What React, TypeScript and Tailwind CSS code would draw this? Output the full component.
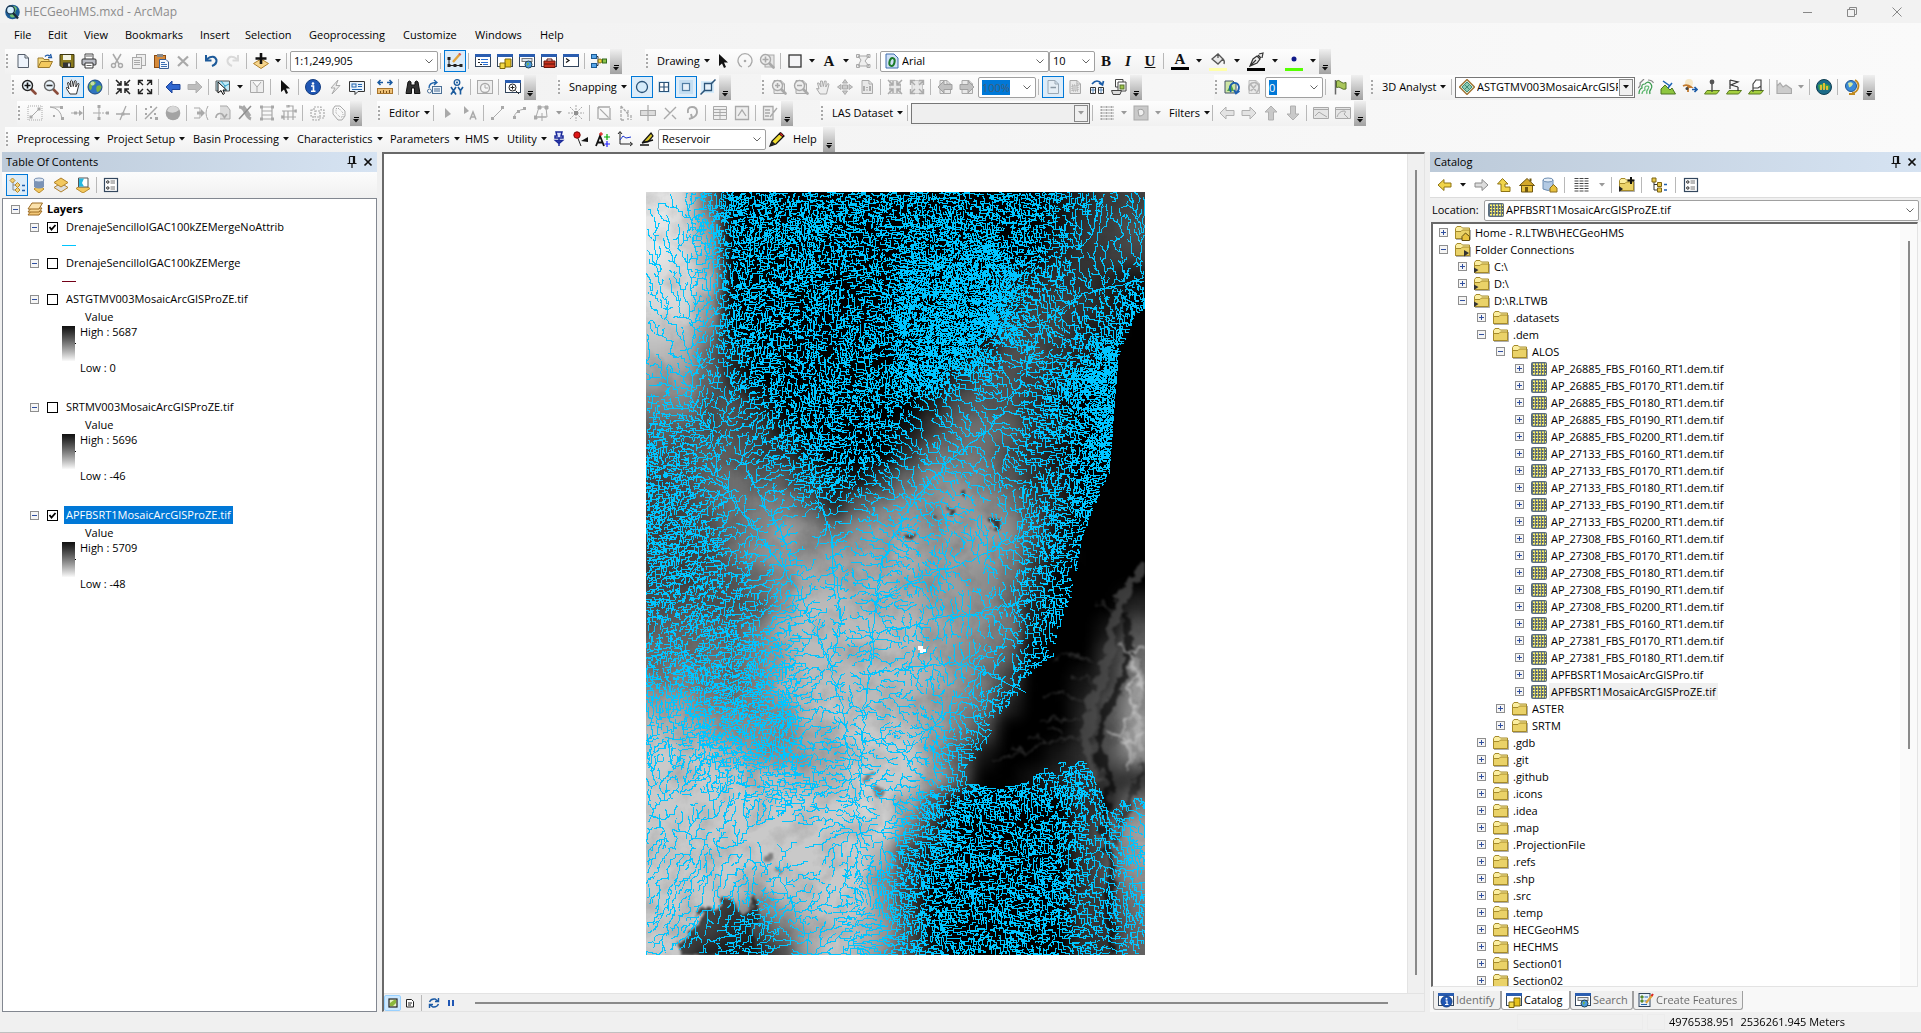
import React from "react";

/* ------------------------------------------------------------------ */
/* Icons                                                               */
/* ------------------------------------------------------------------ */

const G = "#a9a9a9";
const LG = "#d9d9d9";

const lens = (c: string, fill: string, inner: React.ReactNode) => (
  <>
    <path d="M10 10 L14.5 14.5" stroke={c === G ? G : "#8a4b3a"} strokeWidth="2.6" strokeLinecap="round" />
    <circle cx="6.5" cy="6.5" r="5" fill={fill} stroke={c} strokeWidth="1.4" />
    {inner}
  </>
);
const sheet = (c: string, fill: string) => <path d="M3 1.5 H10 L13.5 5 V14.5 H3 Z M10 1.5 V5 H13.5" fill={fill} stroke={c} />;
const win = (
  <>
    <rect x="0.5" y="1.5" width="15" height="12" fill="#fff" stroke="#33455c" />
    <rect x="0" y="1" width="16" height="3" fill="#2a5db0" />
  </>
);
const globe = (
  <>
    <circle cx="8" cy="8" r="7" fill="#2f74c0" stroke="#1b4a80" />
    <path d="M4 3 Q8 1 9 4 Q7 7 5 7 Q5 11 3 11 Q0.5 7 4 3 Z M10 7 Q14 5 14.5 8 Q13 13 10 13 Q8.500 9 10 7 Z" fill="#7cb342" />
    <circle cx="5.500" cy="4.500" r="2" fill="#fff" opacity=".55" />
  </>
);
const raster = (
  <>
    <rect x="0.5" y="1.5" width="15" height="13" rx="1" fill="#5f7488" stroke="#5b6d7d" />
    <path d="M2 3.500 H15 M2 6.500 H15 M2 9.500 H15 M2 12.500 H15" stroke="#fff36a" strokeWidth="2" strokeDasharray="2 1" />
    <path d="M2 5 H15 M2 8 H15 M2 11 H15" stroke="#1c1c1c" strokeWidth="1" strokeDasharray="1 2" />
  </>
);
const folder = (
  <>
    <path d="M0.500 13.500 V3.500 L2 1.500 H6 L7.500 3 H14.500 V13.500 Z" fill="#fbeea0" stroke="#a58a2a" />
    <path d="M0.500 13.500 V6.500 H6 L7.500 5 H14.500 V13.500 Z" fill="#ead268" stroke="#a58a2a" />
    <path d="M1 14.500 H15.500 V5" fill="none" stroke="#777" opacity=".6" />
  </>
);
const corners = (c: string, inward: boolean) =>
  inward ? (
    <path d="M1 1 L6 6 M6 2 V6 H2 M15 1 L10 6 M10 2 V6 H14 M1 15 L6 10 M6 14 V10 H2 M15 15 L10 10 M10 14 V10 H14" fill="none" stroke={c} strokeWidth="1.500" />
  ) : (
    <path d="M6 6 L2 2 M1.500 6 V1.500 H6 M10 6 L14 2 M14.500 6 V1.500 H10 M6 10 L2 14 M1.500 10 V14.500 H6 M10 10 L14 14 M14.500 10 V14.500 H10" fill="none" stroke={c} strokeWidth="1.400" />
  );
const arrowL = (f: string, s: string) => <path d="M1 8 L7 2 V5.500 H15 V10.500 H7 V14 Z" fill={f} stroke={s} />;
const arrowR = (f: string, s: string) => <path d="M15 8 L9 2 V5.500 H1 V10.500 H9 V14 Z" fill={f} stroke={s} />;
const layersIcon = (top: string, y: number) => <path d={`M8 ${y} L15 ${y + 4.5} L8 ${y + 9} L1 ${y + 4.5} Z`} fill={top} stroke="#b0812a" />;
const cursor = (c: string) => <path d="M4 1 V13 L7 10.500 L9 15 L11 14 L9 9.500 H13 Z" fill={c} />;
const green = <path d="M3 11.500 H15.500 L12.500 15 H0.500 Z" fill="#a6d040" stroke="#5b7d20" />;

const ICONS: Record<string, React.ReactNode> = {
  app: (
    <>
      <circle cx="8.500" cy="8" r="7.300" fill="#1c5c96" />
      <path d="M5 2 Q12 1 13 5 Q10 8 12 12 Q8 15 6 12 Z" fill="#6fbf73" />
      <circle cx="6.500" cy="6" r="4" fill="#d5efff" stroke="#1a3550" strokeWidth="1.300" />
      <path d="M9 9 L14 14.500" stroke="#1a2a3a" strokeWidth="2.400" />
    </>
  ),
  newDoc: sheet("#555e6b", "#eef4fc"),
  open: (
    <>
      <path d="M1 14 V5 H6 L7 6.500 H12 V14 Z" fill="#f7dd80" stroke="#9c7a2c" />
      <path d="M1 14.500 L4 8.500 H15.500 L12.500 14.500 Z" fill="#f3c95e" stroke="#9c7a2c" />
      <path d="M8 3.500 Q10 1 13 3 M11 4.500 L14.500 4.500 L13.500 1" fill="none" stroke="#1e5aa8" strokeWidth="1.300" />
    </>
  ),
  save: (
    <>
      <path d="M1 1.500 H15 V14.500 H3 L1 12.500 Z" fill="#8a7a1e" stroke="#3c3610" />
      <rect x="4" y="2" width="8" height="5" fill="#f2f2e2" />
      <rect x="4" y="9.500" width="8" height="5" fill="#333" />
      <rect x="9" y="10.500" width="2" height="3" fill="#ddd" />
    </>
  ),
  print: (
    <>
      <path d="M4 6 V1 H12 V6" fill="#fff" stroke="#444" />
      <rect x="1" y="6" width="14" height="6" rx="1" fill="#b9bcc4" stroke="#333" />
      <path d="M4 10 H12 V15 H4 Z" fill="#fff" stroke="#333" />
      <path d="M5.500 12.500 H10.500 M5 3 H11" stroke="#666" />
    </>
  ),
  cut: (
    <>
      <path d="M4 1 L10 11 M12 1 L6 11" stroke={G} strokeWidth="1.500" />
      <circle cx="4.500" cy="12.500" r="2" fill="none" stroke={G} strokeWidth="1.400" />
      <circle cx="11.500" cy="12.500" r="2" fill="none" stroke={G} strokeWidth="1.400" />
    </>
  ),
  copy: (
    <>
      <rect x="5.500" y="1.500" width="9" height="11" fill="#eee" stroke={G} />
      <rect x="1.500" y="4.500" width="9" height="11" fill="#eee" stroke={G} />
      <path d="M3 7.500 H9 M3 9.500 H9 M3 11.500 H9" stroke={G} />
    </>
  ),
  paste: (
    <>
      <rect x="1.500" y="2.500" width="11" height="12" fill="#d68a3a" stroke="#8a4a10" />
      <rect x="4" y="1" width="6" height="3" fill="#888" />
      <path d="M6.500 6.500 H13 L15.500 9 V15.500 H6.500 Z" fill="#f5f9ff" stroke="#3b5f94" />
      <path d="M8 9.500 H12 M8 11.500 H14 M8 13.500 H14" stroke="#3b6fb4" />
    </>
  ),
  del: <path d="M3 3.500 L13 13 M13 3.500 L3 13" stroke={G} strokeWidth="2.200" />,
  undo: <path d="M4 6 Q11 1 13.500 7 Q14 11 9 13 M3 2 V7.500 H8.500" fill="none" stroke="#1d5a9a" strokeWidth="2" />,
  redo: <path d="M12 6 Q5 1 2.500 7 Q2 11 7 13 M13 2 V7.500 H7.500" fill="none" stroke={LG} strokeWidth="2" />,
  addData: (
    <>
      <path d="M8 6 L15.500 10.500 L8 15.500 L0.500 10.500 Z" fill="#f7d58c" stroke="#b0812a" />
      <path d="M8 0 V11 M2.500 5.500 H13.500" stroke="#111" strokeWidth="2.600" />
    </>
  ),
  editor: (
    <>
      <path d="M2 12.500 H14 M2 12.500 L2 5" stroke="#222" />
      <path d="M0.500 11 h3 v3 h-3 Z M6.500 11 h3 v3 h-3 Z M12.500 11 h3 v3 h-3 Z M0.500 4 h3 v3 h-3 Z" fill="#222" />
      <path d="M6 9 L13 1" stroke="#e2a33c" strokeWidth="2.400" />
      <path d="M12.300 1.800 L13.500 0.500" stroke="#d55" strokeWidth="2.400" />
    </>
  ),
  winToc: (
    <>
      {win}
      <path d="M3 6.500 H5 M3 9.500 H5 M5 11.500 H7" stroke="#222" />
      <path d="M6 6.500 H13 M6 9.500 H13 M8 11.500 H13" stroke="#2a6fd0" />
    </>
  ),
  winCatalog: (
    <>
      {win}
      <path d="M8 6 H14 V14 H8 Z" fill="#e6c21e" stroke="#7d6608" />
      <path d="M3 10 H8 V15.500 H3 Z" fill="#f4da4a" stroke="#7d6608" />
    </>
  ),
  winSearch: (
    <>
      {win}
      <rect x="3" y="5.500" width="10" height="3" fill="#dfe6ee" stroke="#777" />
      <circle cx="9.500" cy="11.500" r="3.500" fill="#4b9be0" stroke="#245" />
      <path d="M8 10 q2 -1 2 1 q-1 1 -2 2 Z" fill="#7cb342" />
    </>
  ),
  winIdentify: (
    <>
      {win}
      <circle cx="8.500" cy="9.500" r="5.500" fill="#1f56b4" stroke="#143d80" />
      <circle cx="8.500" cy="6.800" r="1" fill="#fff" />
      <path d="M7.500 9 H9 V12.500 M7 12.500 H10.500" fill="none" stroke="#fff" strokeWidth="1.200" />
    </>
  ),
  winToolbox: (
    <>
      {win}
      <path d="M3 8 H14 V14.500 H3 Z" fill="#c8321f" stroke="#6a140a" />
      <path d="M6 8 V6 H11 V8 M3 11 H14" fill="none" stroke="#5a1008" />
    </>
  ),
  winPython: (
    <>
      {win}
      <path d="M3 5.500 L6 7.500 L3 9.500" fill="none" stroke="#111" strokeWidth="1.200" />
    </>
  ),
  model: (
    <>
      <path d="M5 3.500 H7 V12.500 H5 M7 8 H10" fill="none" stroke="#333" />
      <rect x="0.500" y="1.500" width="5" height="4" fill="#58a6e8" stroke="#1b5a94" />
      <rect x="0.500" y="10.500" width="5" height="4" fill="#58a6e8" stroke="#1b5a94" />
      <circle cx="9" cy="8" r="2" fill="#f1d33b" stroke="#8a7412" />
      <rect x="11.500" y="6" width="4" height="4" fill="#8bc34a" stroke="#33691e" />
    </>
  ),
  zoomIn: lens("#222", "#eaf4fb", <path d="M6.500 3.500 V9.500 M3.500 6.500 H9.500" stroke="#111" strokeWidth="1.600" />),
  zoomOut: lens("#666", "#eaf4fb", <path d="M3.500 6.500 H9.500" stroke="#333" strokeWidth="1.600" />),
  hand: <path d="M5 15 L1.500 9.500 Q1 8 2.500 8.500 L4 10 L2.500 4 Q3 2.500 4 4 L6 8 L5.500 2 Q6.500 0.500 7.300 2 L8.300 7.500 L9.500 2 Q10.500 1 11.200 2.200 L10.800 8 L12.800 4.500 Q14 4 14 5.200 L12.500 11 L11.500 15 Z" fill="#fff" stroke="#333" />,
  globe,
  fixedIn: corners("#222", true),
  fixedOut: corners("#222", false),
  back: arrowL("#2f66cf", "#1d449a"),
  forward: arrowR("#bdbdbd", "#b0b0b0"),
  select: (
    <>
      <path d="M1 2 H14.500 V12 H1 Z" fill="#bfe9f7" stroke="#555" />
      <path d="M6 2 L10 7 L14 5 M10 7 L9 12" fill="none" stroke="#2b9dc5" />
      <path d="M3 3 V14 L6 11.500 L8 15.500 L9.500 14.500 L8 11 H11.500 Z" fill="#fff" stroke="#111" />
    </>
  ),
  clearSel: <path d="M1.500 1.500 H14.500 V13.500 H1.500 Z M4 3 L8 8 L12 3 M8 8 V13" fill="#eee" stroke={G} />,
  cursor: cursor("#111"),
  cursorGray: <path d="M5 3 V13 L11 9 Z" fill={G} />,
  identify: (
    <>
      <circle cx="8" cy="8" r="7.500" fill="#1f56b4" stroke="#143d80" />
      <circle cx="8" cy="4.500" r="1.300" fill="#fff" />
      <path d="M6 7 H8.500 V12 M6 12.200 H10.500" fill="none" stroke="#fff" strokeWidth="1.600" />
    </>
  ),
  bolt: <path d="M11 1 L4 9 H8 L5 15 L13 6.500 H9 Z" fill="#eee" stroke={G} />,
  popup: (
    <>
      <path d="M0.500 2.500 H15.500 V12.500 H9 L6 15.500 V12.500 H0.500 Z" fill="#e9f2fb" stroke="#333" />
      <rect x="3" y="5" width="4" height="3" fill="none" stroke="#2466b0" />
      <path d="M9 5.500 H13 M9 7.500 H13 M3 10.500 H13" stroke="#2466b0" />
    </>
  ),
  measure: (
    <>
      <path d="M1 3.500 H6 M10 3.500 H15 M3.500 1 L1 3.500 L3.500 6 M12.500 1 L15 3.500 L12.500 6" fill="none" stroke="#1a5aa0" strokeWidth="1.500" />
      <rect x="0.500" y="9.500" width="15" height="5" fill="#eec178" stroke="#a8742c" />
      <path d="M3.500 14 V12 M6.500 14 V11 M9.500 14 V12 M12.500 14 V11" stroke="#7a4f14" />
    </>
  ),
  find: <path d="M1 14.500 L3 3 Q4.500 1 6 3 V6 H10 V3 Q11.500 1 13 3 L15 14.500 H9.500 V9 H6.500 V14.500 Z" fill="#333" stroke="#111" />,
  route: (
    <>
      <path d="M2 9 Q2 3.500 9 3.500 M7 1 L10 3.500 L7 6" fill="none" stroke="#1e62a8" strokeWidth="1.300" />
      <rect x="5.500" y="7.500" width="9" height="7" fill="#eef4fa" stroke="#4a6f96" />
      <path d="M7 10 H13 M7 12 H13" stroke="#4a6f96" />
      <circle cx="2.500" cy="12" r="2" fill="#fff" stroke="#4a6f96" />
    </>
  ),
  xy: (
    <>
      <circle cx="8" cy="3.500" r="2.800" fill="#e7f2fb" stroke="#1a5a9c" strokeWidth="1.300" />
      <circle cx="8" cy="3.500" r="1" fill="#1a5a9c" />
      <path d="M2 8 L7 15.500 M7 8 L2 15.500 M9 8 L11.500 11.500 L14 8 M11.500 11.500 V15.500" fill="none" stroke="#1a5a9c" strokeWidth="1.600" />
    </>
  ),
  time: (
    <>
      <rect x="0.500" y="1.500" width="15" height="13" fill="#eee" stroke={G} />
      <circle cx="8" cy="9" r="4.500" fill="#f5f5f5" stroke={G} strokeWidth="1.300" />
      <path d="M8 6 V9 H11" fill="none" stroke={G} />
    </>
  ),
  viewer: (
    <>
      {win}
      <circle cx="7.500" cy="8.500" r="3.500" fill="#fff" stroke="#222" />
      <path d="M7.500 6.500 V10.500 M5.500 8.500 H9.500 M10.500 11.500 L14 15" stroke="#222" />
    </>
  ),
  snapPoint: <circle cx="8" cy="8" r="5.500" fill="#d5ebfa" stroke="#2a5378" strokeWidth="1.300" />,
  snapEnd: (
    <>
      <rect x="2" y="2" width="12" height="12" fill="#d5ebfa" />
      <path d="M3.500 3.500 H12.500 V12.500 H3.500 Z M8 3.500 V12.500 M3.500 8 H12.500" fill="#fff" stroke="#2a5378" strokeWidth="1.200" />
    </>
  ),
  snapVertex: (
    <>
      <rect x="1" y="1" width="14" height="14" fill="#c4def2" />
      <rect x="4.500" y="4.500" width="7" height="7" fill="#e6f1fa" stroke="#4f7da4" strokeWidth="1.200" />
    </>
  ),
  snapEdge: (
    <>
      <path d="M1 2 H14 V14 H1 Z" fill="#d5ebfa" />
      <path d="M4.500 4.500 H11.500 V11.500 H4.500 Z" fill="#e6f1fa" stroke="#2a5378" strokeWidth="1.300" />
      <path d="M0.500 15.500 L4.500 11.500 M11.500 4.500 L15.500 0.500" stroke="#2a5378" strokeWidth="1.500" />
    </>
  ),
  g1: (
    <>
      <rect x="1" y="1" width="14" height="14" fill="none" stroke={G} strokeDasharray="1 1" />
      <path d="M4 12 L12 4" stroke={G} />
      <path d="M2.500 10.500 h3 v3 h-3 Z M10.500 2.500 h3 v3 h-3 Z" fill={G} />
    </>
  ),
  g2: (
    <>
      <path d="M1 2 H14 M1 2 Q12 3 13 14" fill="none" stroke={G} />
      <path d="M11 1 h3 v3 h-3 Z M12 12 h3 v3 h-3 Z M4 10 h2 v2 h-2 Z" fill={G} />
    </>
  ),
  g3: (
    <>
      <path d="M0 8 H10 M12.500 1 V15" stroke={G} />
      <path d="M3 6.500 h3 v3 h-3 Z M8 5 L12 8 L8 11 Z" fill={G} />
    </>
  ),
  g4: (
    <>
      <path d="M6 1 V15 M0 8 H6" stroke={G} />
      <path d="M6 8 H15" stroke={G} strokeDasharray="2 1" />
      <path d="M4.500 0 h3 v3 h-3 Z M4.500 12 h3 v3 h-3 Z M13 6.500 h3 v3 h-3 Z" fill={G} />
    </>
  ),
  g5: (
    <>
      <path d="M1 9 H15 M5 15 L11 1" stroke={G} strokeWidth="1.300" />
      <rect x="6.500" y="7.500" width="3" height="3" fill={G} />
    </>
  ),
  g6: (
    <>
      <path d="M2 14 L14 2" stroke={G} strokeWidth="1.400" />
      <path d="M2 3 h2 v2 h-2 Z M7 1 h2 v2 h-2 Z M11 8 h2 v2 h-2 Z M7 12 h2 v2 h-2 Z M12 12 h3 v3 h-3 Z M2 8 h2 v2 h-2 Z" fill={G} />
    </>
  ),
  ball: (
    <>
      <circle cx="8" cy="8" r="7.300" fill="#a3a3a3" />
      <path d="M2 6 Q8 10 14 5 Q12 1 8 1 Q4 1 2 6 Z" fill="#d8d8d8" />
    </>
  ),
  g7: (
    <>
      <path d="M1 3 H7 V13 H1 M15 1 Q11 8 15 15" fill="none" stroke={G} />
      <path d="M4 6.500 h4 v-2.500 L12 8 L8 12 v-2.500 h-4 Z" fill={G} />
    </>
  ),
  g8: (
    <>
      <path d="M5 1 H12 L15 5 V14 H5" fill="#ddd" stroke={G} />
      <path d="M1 13 A4 4 0 1 1 9 12 M7 9 L9.500 12.500 L12 9" fill="none" stroke={G} strokeWidth="1.600" />
    </>
  ),
  g9: (
    <>
      <path d="M2 2 Q6 2 8 7 Q11 13 14 14 M6 1 Q9 5 13 11" fill="none" stroke={G} strokeWidth="3" />
      <path d="M14 1 L2 14" stroke="#8f8f8f" strokeWidth="1.500" />
    </>
  ),
  g10: (
    <>
      <path d="M3 2 H13 M3 6 H13 M3 10 H13 M3 14 H13 M3 2 V14 M13 2 V14" stroke={G} fill="none" strokeWidth="1.200" />
      <path d="M1 0.500 h3 v3 h-3 Z M12 0.500 h3 v3 h-3 Z M1 12.500 h3 v3 h-3 Z M12 12.500 h3 v3 h-3 Z" fill={G} />
    </>
  ),
  g11: <path d="M7 1 H12 V15 M1 6 H15 M1 12 H15 M7 6 V15 M3 6 V15 M12 1 V6 M6 0 h2 v2 h-2 Z M14 5 h2 v2 h-2 Z M0 11 h2 v2 h-2 Z" fill="none" stroke={G} strokeWidth="1.200" />,
  g12: <path d="M2 5 H5 V2 H12 V5 H15 V13 H10 V15 H4 V11 H2 Z M6 6 H11 V12 H6 Z" fill="none" stroke={G} strokeDasharray="2 1" strokeWidth="1.200" />,
  g13: (
    <>
      <path d="M4 1 H9 L14 6 V11 L11 15 H7 L2 9 V4 Z" fill="none" stroke={G} />
      <path d="M5 3.500 H8 L12 8 V12 H9 L5 8 Z" fill="none" stroke={G} strokeDasharray="1 1" />
    </>
  ),
  cursorA: (
    <>
      <path d="M2 1 V9 L7 6 Z" fill={G} />
      <path d="M8 14.500 L11 7 L14 14.500 M9 12 H13" fill="none" stroke={G} strokeWidth="1.500" />
    </>
  ),
  line: (
    <>
      <path d="M2 14 L13 3" stroke={G} />
      <path d="M1 12 h3 v3 h-3 Z M11 1 h3 v3 h-3 Z" fill={G} />
    </>
  ),
  arc: (
    <>
      <path d="M2 13 Q3 5 13 4" fill="none" stroke={G} />
      <path d="M1 11 h3 v3 h-3 Z M11 2 h3 v3 h-3 Z M5 5 h3 v3 h-3 Z" fill={G} />
    </>
  ),
  trace: (
    <>
      <path d="M2 12 L5 2 H12 L13 12 Z" fill="none" stroke={G} />
      <path d="M4 1 h3 v3 h-3 Z M11 1 h3 v3 h-3 Z M0 11 h3 v3 h-3 Z M8 8 v8 M4 12 h8" fill={G} stroke={G} />
    </>
  ),
  burst: (
    <>
      <path d="M8 0 V16 M0 8 H16 M2 2 L14 14 M14 2 L2 14" stroke={G} strokeDasharray="2 1" />
      <rect x="6" y="6" width="4" height="4" fill="#8f8f8f" />
    </>
  ),
  edVert: <path d="M2 2 V14 H14 L2 2 M2 2 H14 V14" fill="none" stroke={G} strokeWidth="1.300" strokeDasharray="12 1" />,
  reshape: <path d="M3 1 V15 M3 1 L10 9 M3 15 H7 M10 5 V15 M13 10 V15" fill="none" stroke={G} strokeWidth="1.300" strokeDasharray="3 1" />,
  cutPoly: <path d="M0.500 5.500 H15.500 V10.500 H0.500 Z M8 0 V16" fill="#ddd" stroke={G} strokeWidth="1.200" />,
  split: <path d="M2 14 L14 2 M3 3 L8 8 M10 10 L14 14" stroke={G} strokeWidth="1.400" />,
  rotate: <path d="M4 8 Q3 2 8 2 Q13 2 13 7 Q13 11 8 13 M5 14 L8 13 L7 9" fill="none" stroke={G} strokeWidth="1.900" />,
  attrTable: <path d="M1.500 1.500 H14.500 V14.500 H1.500 Z M1.500 4.500 H14.500 M1.500 7.500 H14.500 M1.500 10.500 H14.500 M8 4 V14" fill="#eee" stroke={G} />,
  sketch: <path d="M1.500 1.500 H14.500 V14.500 H1.500 Z M4 11 L8 5 L12 11" fill="#eee" stroke={G} strokeWidth="1.300" />,
  createGray: <path d="M1.500 1.500 H11 V14.500 H1.500 Z M3 5 H8 M3 8 H8 M3 11 H7 M15 3 L8 12" fill="#eee" stroke={G} strokeWidth="1.300" />,
  rotEl: (
    <>
      <path d="M5 14 A7 7 0 1 1 11 14" fill="none" stroke={G} strokeWidth="1.300" />
      <circle cx="8" cy="8" r="1.300" fill={G} />
    </>
  ),
  zoomEl: (
    <>
      <rect x="6" y="2" width="9" height="12" fill="#e5e5e5" stroke={G} />
      {lens(G, "#eee", <path d="M6.500 3.500 V9.500 M3.500 6.500 H9.500" stroke={G} strokeWidth="1.600" />)}
    </>
  ),
  rect: <rect x="2" y="2" width="12" height="12" fill="#f4f4f6" stroke="#333" strokeWidth="1.300" />,
  vertEl: <path d="M3 3 H14 L10 8 L14 13 H3 L6 7 Z M1.500 1.500 h3 v3 h-3 Z M12 1.500 h3 v3 h-3 Z M12 11.500 h3 v3 h-3 Z M1.500 11.500 h3 v3 h-3 Z" fill="#eee" stroke={G} />,
  bucket: <path d="M2 7 L8 2 L13 7 L8 12 Z M8 2 V6 M13 7 Q15 9 14 12" fill="#e9e9e9" stroke="#555" strokeWidth="1.300" />,
  pen: <path d="M2 14 L5 7 L9 4 L12 7 L9 11 Z M2 14 L8 8 M10 3 L13 6 M11 2 L15 1 L14 6" fill="#eee" stroke="#333" strokeWidth="1.200" />,
  dot: <circle cx="8" cy="7" r="2.500" fill="#111a8a" />,
  lZoomIn: (
    <>
      {sheet(G, "#e8e8e8")}
      {lens(G, "#eee", <path d="M6.500 4 V9 M4 6.500 H9" stroke={G} strokeWidth="1.500" />)}
    </>
  ),
  lZoomOut: (
    <>
      {sheet(G, "#e8e8e8")}
      {lens(G, "#eee", <path d="M4 6.500 H9" stroke={G} strokeWidth="1.500" />)}
    </>
  ),
  lHand: <path d="M5 15 L1.500 9.500 L4 10 L2.500 4 L4 4 L6 8 L5.500 2 L7.300 2 L8.300 7.500 L9.500 2 L11.200 2.200 L10.800 8 L12.800 4.500 L14 5.200 L12.500 11 L11.500 15 Z" fill="#eee" stroke={G} />,
  lMove: <path d="M8 0.500 L10.500 4 H5.500 Z M8 15.500 L10.500 12 H5.500 Z M0.500 8 L4 5.500 V10.500 Z M15.500 8 L12 5.500 V10.500 Z M5.500 6 H10.500 V10 H5.500 Z" fill="#ccc" stroke={G} />,
  l11: (
    <>
      {sheet(G, "#e8e8e8")}
      <path d="M5 7 V12 M11 7 V12 M8 8 V9 M8 10.500 V11.500" stroke="#999" strokeWidth="1.500" />
    </>
  ),
  lIn: (
    <>
      {sheet("#c4c4c4", "#e8e8e8")}
      {corners("#aaa", true)}
    </>
  ),
  lOut: (
    <>
      {sheet("#c4c4c4", "#e8e8e8")}
      {corners("#aaa", false)}
    </>
  ),
  lBack: (
    <>
      {sheet(G, "#e8e8e8")}
      {arrowL("#c0c0c0", "#a0a0a0")}
    </>
  ),
  lFwd: (
    <>
      {sheet(G, "#e8e8e8")}
      {arrowR("#c0c0c0", "#a0a0a0")}
    </>
  ),
  draft: (
    <>
      {sheet("#9aa8b4", "#e5eef5")}
      <path d="M5.500 8.500 H11" stroke="#8a98a4" strokeWidth="1.500" />
    </>
  ),
  focus: (
    <>
      {sheet(G, "#e8e8e8")}
      <rect x="5" y="6" width="6" height="6" fill="#ccc" stroke={G} strokeDasharray="1 1" />
    </>
  ),
  changeLayout: (
    <>
      <path d="M3 5 Q8 -1 13 5 M10 4 L13.500 6 L14.500 2" fill="none" stroke="#1c5da8" strokeWidth="1.700" />
      <path d="M1.500 8.500 H6.500 V14.500 H1.500 Z M9.500 8.500 H14.500 V14.500 H9.500 Z" fill="#fff" stroke="#333" />
      <path d="M2 11 H6 M10 11 H14 M4 9 V14 M12 9 V14" stroke="#5b87b8" />
    </>
  ),
  pages: (
    <>
      <path d="M4.500 0.500 H12 V8 H4.500 Z" fill="#fff" stroke="#444" />
      <path d="M7 3 H15 V12 H7 Z" fill="#fff" stroke="#444" />
      <rect x="9" y="6" width="4" height="4" fill="#9dc34a" stroke="#55722a" />
      <path d="M0.500 11.500 H10.500 L9 15.500 H2 Z" fill="#dcdcdc" stroke="#444" />
    </>
  ),
  refreshSheet: (
    <>
      <path d="M1 2 H9 L12 5 V14 H1 Z" fill="#cfe6a5" stroke="#456" />
      <path d="M3 12 L7 5 L10 12 Z" fill="#4ba34a" />
      <path d="M7 13 Q4 7 9 4 Q14 3 15 8 Q15 12 12 14 M15.500 12 L12 14.500 L10 11" fill="none" stroke="#1d5fae" strokeWidth="1.800" />
    </>
  ),
  refreshGray: (
    <>
      {sheet("#bbb", "#e8e8e8")}
      <path d="M4 12 Q1 7 6 4 Q12 2 13 8 Q13 12 10 14 M5 6 L10 12 M10 6 L5 12" fill="none" stroke="#b5b5b5" strokeWidth="1.500" />
    </>
  ),
  flag: (
    <>
      <path d="M3.500 1 V15.500" stroke="#666" strokeWidth="1.500" />
      <path d="M4.500 2 Q7 0.500 9 3 Q11 5 14 3.500 V10 Q11 11 9 9 Q7 7.500 4.500 8.500 Z" fill="#a9c65a" stroke="#56702a" />
    </>
  ),
  diamond: (
    <>
      <path d="M8 0.500 L15.500 8 L8 15.500 L0.500 8 Z" fill="#d8eee4" stroke="#a0702e" strokeWidth="1.300" />
      <path d="M8 3 L13 8 L8 13 L3 8 Z M5.500 5.500 L10.500 10.500 M10.500 5.500 L5.500 10.500" fill="#8ccbb4" stroke="#3f8a74" />
    </>
  ),
  contour: (
    <g fill="none" strokeWidth="1.200">
      <path d="M1 15 Q1 10 4 9 Q3 5 7 5 Q9 2 12 4 Q15 7 13 10 Q11 12 12 15" stroke="#3a9a4e" />
      <path d="M4 15 Q4 12 7 11 Q6 7 9 7 Q12 7 10 10 Q8 12 9 15" stroke="#5cb86e" />
      <path d="M0 9 Q3 7 2 4 Q4 2 6 0 M10 1 Q14 1 15.500 4" stroke="#888" />
    </g>
  ),
  steep: (
    <>
      <path d="M1 15 V10 L5 6 L10 11 L12 9 L15.500 15 Z" fill="#8ec63f" stroke="#4c7420" />
      <path d="M3 2 L10 7 M8 9 L12 4" stroke="#1b62b5" strokeWidth="1.500" />
    </>
  ),
  sight: (
    <>
      <circle cx="7" cy="4" r="4" fill="#f6e8c8" />
      <path d="M1 7 Q5 5 9 8 L6 8 V13" fill="none" stroke="#c27a2e" strokeWidth="1.800" />
      <circle cx="5" cy="9.500" r="1.500" fill="#444" />
      <path d="M10 10.500 H15 M12.500 8 L15 10.500 L12.500 13" fill="none" stroke="#1b5aa5" strokeWidth="1.700" />
    </>
  ),
  ipPoint: (
    <>
      {green}
      <path d="M8 4 V13" stroke="#444" strokeWidth="1.300" />
      <circle cx="8" cy="3" r="2.400" fill="#555" />
    </>
  ),
  ipLine: (
    <>
      {green}
      <path d="M4 1 L12 3 L5 6 L12 8 M4 1 V10 M12 8 V12" fill="none" stroke="#333" strokeWidth="1.200" />
    </>
  ),
  ipPoly: (
    <>
      {green}
      <path d="M5 5 L8 1 H13 V7 L10 9 H5 Z M5 9 V13 M13 7 V12" fill="#fff" stroke="#444" strokeWidth="1.200" />
    </>
  ),
  profile: <path d="M1 1 V14.500 H15.500 V10 L10 6 L7 8 L4 4 L1 7" fill="#ccc" stroke={G} strokeWidth="1.200" />,
  arcScene: (
    <>
      <circle cx="8" cy="8" r="7.500" fill="#1a6a88" stroke="#0f3e50" />
      <path d="M2 6 Q8 3 14 7 L13 11 Q8 8 3 11 Z" fill="#3da04c" />
      <path d="M5 11 V6 M8 11 V4 M11 11 V7" stroke="#f2c230" strokeWidth="1.800" fill="none" />
    </>
  ),
  arcGlobe: (
    <>
      <path d="M11 1 A7 7 0 0 1 8 14 M5 15 H11" fill="none" stroke="#c08a20" strokeWidth="1.800" />
      <circle cx="7" cy="7" r="5.500" fill="#3b8ad8" stroke="#1f5690" />
      <path d="M4 4 Q8 2 9 5 Q7 9 5 8 Z" fill="#d3e8a0" />
    </>
  ),
  las: (
    <path d="M1.500 2 H15 M1.500 5 H15 M1.500 8 H15 M1.500 11 H15 M1.500 14 H15" stroke={G} strokeWidth="2" strokeDasharray="2 1 1 1" />
  ),
  lasSurf: (
    <>
      <rect x="1" y="1" width="14" height="14" fill="#c9c9c9" stroke={G} />
      <path d="M5 5 Q10 3 11 7 Q11 11 6 11 Z" fill="#efefef" stroke="#a0a0a0" />
    </>
  ),
  gLeft: arrowL("#e3e3e3", "#b0b0b0"),
  gRight: arrowR("#e3e3e3", "#b0b0b0"),
  gUp: <path d="M8 1 L14 7 H10.500 V15 H5.500 V7 H2 Z" fill="#c9c9c9" stroke="#b0b0b0" />,
  gDown: <path d="M8 15 L14 9 H10.500 V1 H5.500 V9 H2 Z" fill="#c9c9c9" stroke="#b0b0b0" />,
  lasProf: <path d="M0.500 2.500 H15.500 V13.500 H0.500 Z M0.500 4.500 H15.500 M2 11 L6 7 L9 9 L14 12" fill="#e5e5e5" stroke={G} />,
  las3d: <path d="M0.500 2.500 H15.500 V13.500 H0.500 Z M0.500 4.500 H15.500 M2 12 Q4 6 9 6 Q12 6 9 9 L13 13" fill="#e5e5e5" stroke={G} />,
  flow: (
    <>
      <path d="M5 1 H11 L10 5 H12 V7 H4 V5 H6 Z" fill="#dde2ff" stroke="#1c2a9a" strokeWidth="1.500" />
      <path d="M8 7 V15 M4.500 9.500 H11.500 L8 12.500 Z" fill="#8a94e0" stroke="#1c2a9a" strokeWidth="1.500" />
    </>
  ),
  pinRed: (
    <>
      <path d="M4 5 L8 15" stroke="#222" />
      <circle cx="4" cy="4" r="3.200" fill="#e01616" stroke="#7a0808" />
      <path d="M8 10 L15 6 V11 Z" fill="#111" />
    </>
  ),
  aPlus: (
    <>
      <path d="M1 15 L5 5 L9 15 M3 11.500 H7.500" fill="none" stroke="#111" strokeWidth="1.800" />
      <path d="M6 1 V5 M4 3 H8" stroke="#d00" />
      <path d="M12 3 V9 M9 6 H15" stroke="#0a0" strokeWidth="1.200" />
      <path d="M12 10 V16 M9.500 13 H15" stroke="#22f" strokeWidth="1.200" />
    </>
  ),
  axis: (
    <>
      <path d="M3 1 V13 H15 M1 3 L3 0.500 L5 3 M13 11 L15.500 13 L13 15" fill="none" stroke="#222" />
      <path d="M3 9 L6 5 L9 7 L14 6" fill="none" stroke="#1a35d0" />
    </>
  ),
  quill: (
    <>
      <path d="M4 11 L12 2 L14 5 L9 11 Z" fill="#d8c52a" stroke="#111" strokeWidth="1.200" />
      <path d="M1 14 H10 M3 12 L14 9" stroke="#111" strokeWidth="1.600" />
    </>
  ),
  pencil: (
    <>
      <path d="M1 15 L3 10 L11 2 L15 5 L7 13 Z" fill="#f0dc30" stroke="#111" strokeWidth="1.200" />
      <path d="M10 3 L14 6 L15 5 L12 1.500 Z" fill="#e22" stroke="#111" />
      <path d="M1 15 L3 10 L6.500 13 Z" fill="#222" />
    </>
  ),
  listOrder: (
    <>
      <path d="M4 4 V13 H8 M4 8 H8" fill="none" stroke="#888" />
      <path d="M3.500 1 L6 3.500 L3.500 6 L1 3.500 Z M8.500 5.500 L11 8 L8.500 10.500 L6 8 Z M8.500 10.500 L11 13 L8.500 15.500 L6 13 Z" fill="#f3d27a" stroke="#b98a2c" />
      <path d="M13 8.500 H16 M13 13.500 H16" stroke="#1f5fae" strokeWidth="1.500" />
    </>
  ),
  listSource: (
    <>
      <path d="M8 8 L13 12 L8 16 L3 12 Z" fill="#f3c85e" stroke="#b98a2c" />
      <path d="M3 3 V10 Q8 13 13 10 V3 Z" fill="#7b93b5" />
      <ellipse cx="8" cy="3" rx="5" ry="2" fill="#dbe5f1" stroke="#7b93b5" />
    </>
  ),
  listVis: (
    <>
      {layersIcon("#ddd", 6)}
      {layersIcon("#f3c85e", 1)}
    </>
  ),
  listSel: (
    <>
      <path d="M8 7 L15 11.500 L8 16 L1 11.500 Z" fill="#f3c85e" stroke="#b98a2c" />
      <path d="M3.500 1 H13 V10 H3.500 Z" fill="#fff" stroke="#555" />
      <path d="M4 1.500 H9 L7 6 L9 9.500 H4 Z" fill="#25b8e0" />
    </>
  ),
  options: (
    <>
      <rect x="1.500" y="1.500" width="13" height="13" fill="#fff" stroke="#33475e" strokeWidth="1.200" />
      <path d="M7.500 4 H12 M7.500 6 H12 M7.500 10 H12 M7.500 12 H12" stroke="#777" />
      <circle cx="4.800" cy="5" r="1.200" fill="#fff" stroke="#222" />
      <circle cx="4.800" cy="11" r="1.200" fill="#fff" stroke="#222" />
    </>
  ),
  layers: (
    <>
      <path d="M1 14 L4 10 H15 L12 14 Z" fill="#f3c878" stroke="#9c6a20" />
      <path d="M1 11 L4 7 H15 L12 11 Z" fill="#f7d590" stroke="#9c6a20" />
      <path d="M1 8 L5 2 H15.500 L12 8 Z" fill="#fbe2ac" stroke="#9c6a20" />
    </>
  ),
  cBack: <path d="M1 8 L7 2.500 V6 H14 V10 H7 V13.500 Z" fill="#f0d44a" stroke="#8f7414" />,
  cFwd: <path d="M15 8 L9 2.500 V6 H2 V10 H9 V13.500 Z" fill="#dcdcdc" stroke="#8a8a8a" />,
  cUp: <path d="M6.500 1.500 L12 7 H9 V10 H14 V14.500 H5 V7 H1.500 Z" fill="#f0d44a" stroke="#8f7414" />,
  home: (
    <>
      <path d="M2.500 8 V15 H13.500 V8" fill="#e8c23e" stroke="#6e5610" />
      <path d="M0.500 8.500 L8 1.500 L15.500 8.500 Z" fill="#d4a82a" stroke="#6e5610" />
      <path d="M6 10 H9 V15 H6 Z" fill="#6e5610" />
      <path d="M11.500 1.500 V4.500" stroke="#6e5610" strokeWidth="2" />
    </>
  ),
  dbHome: (
    <>
      <path d="M1 3 V12 Q6 15 11 12 V3 Z" fill="#b3cae4" stroke="#6d8db2" />
      <ellipse cx="6" cy="3" rx="5" ry="2" fill="#e6eff8" stroke="#6d8db2" />
      <path d="M8 15 V11 L11.500 7.500 L15 11 V15 Z" fill="#e8c23e" stroke="#8a6d1e" />
    </>
  ),
  gridView: (
    <path d="M0.500 1.500 H15.500 M0.500 4 H15.500 M0.500 6.500 H15.500 M0.500 9 H15.500 M0.500 11.500 H15.500 M0.500 14 H15.500" stroke="#444" strokeDasharray="4 1" />
  ),
  connect: (
    <>
      {folder}
      <path d="M12 0 V7 M8.500 3.500 H15.500" stroke="#111" strokeWidth="2" />
      <path d="M0 9 L4 12 L0 15 Z" fill="#222" />
    </>
  ),
  treeView: (
    <>
      <path d="M3 4 V13 H7 M3 7.500 H7" fill="none" stroke="#333" />
      <path d="M1 1 h4 v4 h-4 Z M6.500 5.500 h4 v4 h-4 Z M6.500 11 h4 v4 h-4 Z" fill="#e8c84a" stroke="#7d6412" />
      <path d="M13 7.500 H16 M13 13 H16" stroke="#1f5fae" strokeWidth="1.500" />
    </>
  ),
  raster,
  folder,
  folderHome: (
    <>
      {folder}
      <path d="M7 15.500 V11.500 L10.500 8 L14.500 11.500 V15.500 Z" fill="#e8c23e" stroke="#5e4a10" />
    </>
  ),
  folderConn: (
    <>
      {folder}
      <path d="M9 8 L14 11 L9 14.500 Z" fill="#333" />
    </>
  ),
  folderLink: (
    <>
      {folder}
      <path d="M0 8.500 L4.500 11 L0 14 Z" fill="#333" />
    </>
  ),
  createFeat: (
    <>
      <rect x="1" y="1.500" width="11" height="13" fill="#e8f1fa" stroke="#33475e" />
      <path d="M3 4 h2 v2 h-2 Z M3 8 h2 v2 h-2 Z" fill="#8bc34a" stroke="#467a1c" />
      <path d="M6.500 5 H10 M6.500 9 H9 M3 12.500 H9" stroke="#2466b0" />
      <path d="M8 11 L14.500 3" stroke="#e2a33c" strokeWidth="2" />
      <path d="M13.500 4 L15 2" stroke="#d22" strokeWidth="2" />
    </>
  ),
  dataView: (
    <>
      <rect x="4" y="4" width="8" height="8" fill="#e8f3c8" stroke="#222" strokeWidth="1.200" />
      <path d="M5 8 L9 5 H11 V8 L8 11 H5 Z" fill="#8bb83c" />
    </>
  ),
  layoutView: <path d="M4.500 4.500 H9.500 L11.500 6.500 V12 H4.500 Z M6 8 H10 M6 10 H9" fill="#fff" stroke="#222" />,
  refresh: <path d="M3.500 7 Q5 3.500 9 4 L12 6 M12.500 3 V6.500 H9 M12.500 9 Q11 12.500 7 12 L4 10 M3.500 13 V9.500 H7" fill="none" stroke="#1b5aa5" strokeWidth="1.400" />,
  pause: <path d="M5 5 H7 V11 H5 Z M9 5 H11 V11 H9 Z" fill="#1f56b4" />,
  winMin: <path d="M4 8.500 H13" stroke="#888" />,
  winRest: <path d="M3.500 5.500 H10.500 V12.500 H3.500 Z M5.500 5.500 V3.500 H12.500 V10.500 H10.500" fill="none" stroke="#888" />,
  winClose: <path d="M3.500 3.500 L12.500 12.500 M12.500 3.500 L3.500 12.500" stroke="#888" />,
  pin: <path d="M5.500 2.500 H10.500 V9 M5.500 2.500 V9 M9.500 3 V9 M3.500 9.500 H12.500 M8 10 V14" fill="none" stroke="#111" strokeWidth="1.200" />,
  close: <path d="M4.500 4.500 L11.500 11.500 M11.500 4.500 L4.500 11.500" stroke="#111" strokeWidth="1.700" />,
  docArial: (
    <>
      <path d="M2 1 H10 L14 5 V15 H2 Z" fill="#cfe0f6" stroke="#3f6cae" />
      <ellipse cx="8" cy="9" rx="2.500" ry="4" transform="rotate(15 8 9)" fill="none" stroke="#1c7a2a" strokeWidth="2" />
    </>
  ),
};

function Icon({ n }: { n: string }) {
  return (
    <svg viewBox="0 0 16 16" className="h-4 w-4 shrink-0" fill="none" aria-hidden="true">
      {ICONS[n]}
    </svg>
  );
}

/* ------------------------------------------------------------------ */
/* Toolbar parts                                                       */
/* ------------------------------------------------------------------ */

const Caret = ({ gray }: { gray?: boolean }) => (
  <svg viewBox="0 0 6 4" className="h-1 w-1.5 shrink-0" aria-hidden="true">
    <path d="M0 0 H6 L3 3.500 Z" fill={gray ? "#999" : "#111"} />
  </svg>
);

function Btn({ n, on, wide }: { n: string; on?: boolean; wide?: boolean }) {
  return (
    <button
      aria-label={n}
      className={
        (wide ? "w-[26px] " : "w-[22px] ") +
        "flex h-[22px] shrink-0 items-center justify-center border " +
        (on ? "border-[#0078d7] bg-[#dcecf9]" : "border-transparent")
      }
    >
      <Icon n={n} />
    </button>
  );
}
const Drop = ({ gray }: { gray?: boolean }) => (
  <button aria-label="More choices" className="flex h-[22px] w-3 shrink-0 items-center justify-center">
    <Caret gray={gray} />
  </button>
);
const Sep = () => <span className="mx-[2px] h-4 w-[2px] shrink-0 border-l border-[#b8b8b8]" />;

function MenuBtn({ w, children, plain }: { w: string; children: React.ReactNode; plain?: boolean }) {
  return (
    <button className={w + " flex shrink-0 items-center gap-1 whitespace-nowrap pl-[5px]"}>
      {children}
      {!plain && <Caret />}
    </button>
  );
}

function Toolbar({ ml, children }: { ml: string; children: React.ReactNode }) {
  return (
    <div role="toolbar" className={ml + " flex h-[25px] shrink-0 items-center bg-linear-to-b from-[#fdfdfd] to-[#f1f1f1]"}>
      <span className="mr-1 ml-[1px] h-[14px] w-[2px] shrink-0 border-l-2 border-dotted border-[#a8a8a8]" />
      {children}
      <button aria-label="Toolbar options" className="flex h-full w-3 shrink-0 flex-col items-center justify-end gap-px bg-linear-to-b from-[#f0f0f0] to-[#a2a2a2] pb-[3px]">
        <span className="h-px w-[5px] bg-black" />
        <Caret />
      </button>
    </div>
  );
}

function Combo({ w, label, value, icon, boxed, gray, mark }: { w: string; label: string; value: string; icon?: string; boxed?: boolean; gray?: boolean; mark?: string }) {
  return (
    <label
      className={
        w +
        " relative flex h-[21px] shrink-0 items-center border pr-4 pl-[3px] " +
        (boxed ? "border-[#777] " : "rounded-[2px] border-[#a0a0a0] ") +
        (gray ? "bg-[#efefef]" : "bg-white")
      }
    >
      {icon && <Icon n={icon} />}
      <select
        aria-label={label}
        className={
          "min-w-0 appearance-none overflow-hidden whitespace-nowrap outline-none " +
          (mark ? "bg-[#0078d7] leading-[15px] " + mark : "flex-1 bg-transparent ") +
          (icon ? "ml-[2px]" : "")
        }
      >
        <option>{value}</option>
      </select>
      <span
        className={
          "pointer-events-none absolute inset-y-px right-px flex w-[14px] items-center justify-center " +
          (boxed ? "border border-[#888] bg-[#f0f0f0]" : "")
        }
      >
        {boxed ? (
          <Caret gray={gray} />
        ) : (
          <svg viewBox="0 0 8 5" className="h-[5px] w-2" fill="none" aria-hidden="true">
            <path d="M0.500 0.500 L4 4 L7.500 0.500" stroke="#666" />
          </svg>
        )}
      </span>
    </label>
  );
}

function Letter({ ch, cls, bar }: { ch: string; cls: string; bar?: string }) {
  return (
    <button aria-label={"Format " + ch} className={(bar ? "w-[26px]" : "w-[22px]") + " flex h-[22px] shrink-0 flex-col items-center justify-center"}>
      <span className={'font-["Liberation_Serif"] text-[15px] leading-[15px] text-[#111] ' + cls}>{ch}</span>
      {bar && <span className={"h-[3px] w-[18px] " + bar} />}
    </button>
  );
}
function Swatch({ n, bar }: { n: string; bar: string }) {
  return (
    <button aria-label={n} className="flex h-[22px] w-[26px] shrink-0 flex-col items-center justify-center">
      <Icon n={n} />
      <span className={"h-[3px] w-[18px] " + bar} />
    </button>
  );
}

/* ------------------------------------------------------------------ */
/* Map: hill shade cells and a generated drainage network              */
/* ------------------------------------------------------------------ */

const MAP_W = 499;
const MAP_H = 763;
const CELL = 25;

const SHADE = [
  "fe700000000000001244",
  "fea00000000000001345",
  "feb00000000000002344",
  "eec00000000000123321",
  "eeb00000000000244320",
  "dd900000000000444210",
  "cb620000000002553200",
  "aa720000000035542000",
  "88552000000256531000",
  "66554100001477632000",
  "55664310003787531000",
  "45676631147998632000",
  "446788626899a9842000",
  "44578a979aa9aa951000",
  "44479a9aabbaaa941000",
  "445579bbbbbaa9830000",
  "55556acccbbaa9720002",
  "66668bcccccba9810015",
  "77778bcccccb98600037",
  "88778ccccccba8400138",
  "aa888acdccba97200259",
  "cba998bcddcb8500025a",
  "ddcb99abddda61001359",
  "ddddccbbdddb60012333",
  "ddddddddedb500000328",
  "ddddddddde830000036a",
  "dddddddddb410000036b",
  "ddddcdddd94000000359",
  "dddb9bcdd94000000438",
  "ddd748bdca5000000337",
  "dd4225adc95100000336",
];

const DENSITY = [
  "23788888888888877654",
  "33788888878888776433",
  "33688887777899886333",
  "33677777779999976445",
  "33577777779999965457",
  "33577777779999954677",
  "33567777779998465890",
  "44557777779966448990",
  "65546777775433467890",
  "76545777764333467890",
  "87534677754333466890",
  "87523567543334466880",
  "88532344334444367800",
  "88643323344444367700",
  "88754323344443367600",
  "78764433444433366000",
  "77665533444443466000",
  "67776533444443466700",
  "77777633434444566600",
  "77888733434444477500",
  "67888843434345667000",
  "66888844443455760000",
  "55788854433566600088",
  "44566664434567777777",
  "33345654435777777755",
  "33330114346777777665",
  "44432114447777777656",
  "44444333567777777656",
  "44445343567777777666",
  "44366443667777776656",
  "44366443667777776656",
];

const COAST: number[][] = [
  [500, 118], [490, 121], [472, 165], [466, 245], [463, 281], [451, 308], [436, 345], [427, 401], [412, 435], [407, 463],
  [376, 488], [373, 501], [349, 528], [339, 555], [322, 575], [322, 591], [352, 595], [383, 588], [434, 554], [452, 595],
  [464, 621], [478, 606], [500, 606],
];

const RIVERS: number[][][] = [
  [[64, 240], [70, 285], [92, 315], [140, 380], [165, 430], [182, 470], [196, 520], [204, 580], [214, 640]],
  [[95, 265], [115, 305], [150, 372]],
  [[498, 85], [440, 100], [395, 130], [375, 190], [345, 235], [300, 270], [262, 315], [235, 370], [228, 430], [222, 480], [216, 540], [214, 590]],
  [[400, 405], [330, 420], [270, 432], [230, 440]],
  [[400, 330], [330, 365], [260, 392], [228, 410]],
  [[380, 500], [320, 470], [222, 480]],
  [[300, 520], [260, 560], [216, 540]],
  [[165, 280], [185, 350], [195, 430], [185, 470]],
  [[0, 620], [60, 650], [130, 680], [160, 740], [165, 762]],
];

function buildStreams(): string {
  let seed = 20231;
  const rnd = () => {
    seed = (seed * 1664525 + 1013904223) >>> 0;
    return seed / 4294967296;
  };
  const lattice: number[] = Array.from({ length: 64 * 64 }, rnd);
  const noise = (x: number, y: number) => {
    const xi = Math.floor(x);
    const yi = Math.floor(y);
    const fx = x - xi;
    const fy = y - yi;
    const at = (a: number, b: number) => lattice[((b & 63) << 6) + (a & 63)];
    const top = at(xi, yi) * (1 - fx) + at(xi + 1, yi) * fx;
    const bot = at(xi, yi + 1) * (1 - fx) + at(xi + 1, yi + 1) * fx;
    return top * (1 - fy) + bot * fy;
  };
  const inSea = (x: number, y: number) => {
    let inside = false;
    for (let i = 0, j = COAST.length - 1; i < COAST.length; j = i++) {
      const [xa, ya] = COAST[i];
      const [xb, yb] = COAST[j];
      if (ya > y !== yb > y && x < ((xb - xa) * (y - ya)) / (yb - ya) + xa) inside = !inside;
    }
    return inside;
  };
  const riverDist = (x: number, y: number) => {
    let best = 1e9;
    for (const r of RIVERS)
      for (let i = 1; i < r.length; i++) {
        const [ax, ay] = r[i - 1];
        const [bx, by] = r[i];
        const dx = bx - ax;
        const dy = by - ay;
        const t = Math.max(0, Math.min(1, ((x - ax) * dx + (y - ay) * dy) / (dx * dx + dy * dy)));
        const d = Math.hypot(x - ax - t * dx, y - ay - t * dy) - t * 2 - i * 3;
        if (d < best) best = d;
      }
    return best;
  };
  const gap = [99, 14, 8, 5.2, 4.2, 3.3, 2.7, 2.2, 1.95, 1.4];
  type P = { x: number; y: number; e: number; s: number };
  const B = 8;
  const cols = Math.ceil(MAP_W / B) + 1;
  const rows = Math.ceil(MAP_H / B) + 1;
  const buckets: P[][] = Array.from({ length: cols * rows }, () => []);
  const pts: P[] = [];
  for (let y = 0; y < MAP_H; y++)
    for (let x = 0; x < MAP_W; x++) {
      const jx = x + (rnd() - 0.5) * 16;
      const jy = y + (rnd() - 0.5) * 16;
      const cx = Math.max(0, Math.min(19, Math.floor(jx / CELL)));
      const cy = Math.max(0, Math.min(30, Math.floor(jy / CELL)));
      const block = x > 261 && x < 335 && y > 65 && y < 182;
      const d = block ? 9 : Number(DENSITY[cy][cx]);
      const s = gap[d];
      if (rnd() > (0.6 + 0.8 * noise(x / 14, y / 14)) / (s * s) || inSea(x, y)) continue;
      const rough = d > 6 ? 26 : d > 4 ? 16 : 7;
      const e = riverDist(x, y) * 0.7 + noise(x / 17, y / 17) * rough + noise(x / 6 + 9, y / 6) * rough * 0.35;
      const p = { x, y, e, s };
      pts.push(p);
      buckets[Math.floor(y / B) * cols + Math.floor(x / B)].push(p);
    }
  const out: string[] = [];
  for (const p of pts) {
    const R = Math.min(20, p.s * 2.8);
    let best: P | null = null;
    let cost = 1e9;
    for (let by = Math.max(0, Math.floor((p.y - R) / B)); by <= Math.min(rows - 1, Math.floor((p.y + R) / B)); by++)
      for (let bx = Math.max(0, Math.floor((p.x - R) / B)); bx <= Math.min(cols - 1, Math.floor((p.x + R) / B)); bx++)
        for (const q of buckets[by * cols + bx]) {
          if (q.e >= p.e) continue;
          const dist = Math.hypot(q.x - p.x, q.y - p.y);
          if (dist > R || dist < 1.2) continue;
          const c = dist - Math.min(p.e - q.e, dist) * 0.75;
          if (c < cost) {
            cost = c;
            best = q;
          }
        }
    if (!best) continue;
    const x0 = p.x + 0.5;
    const y0 = p.y + 0.5;
    const x1 = best.x + 0.5;
    const y1 = best.y + 0.5;
    const mx = Math.round((p.x + best.x) / 2) + 0.5;
    const my = Math.round((p.y + best.y) / 2) + 0.5;
    if (p.s > 3) out.push(rnd() < 0.5 ? `M${x0} ${y0}H${mx}V${my}L${x1} ${y1}` : `M${x0} ${y0}L${mx} ${my}V${y1}H${x1}`);
    else out.push(rnd() < 0.5 ? `M${x0} ${y0}H${x1}V${y1}` : `M${x0} ${y0}V${y1}H${x1}`);
  }
  for (const r of RIVERS.slice(0, 8))
    for (let i = 1; i < r.length; i++) {
      const [ax, ay] = r[i - 1];
      const [bx, by] = r[i];
      const n = Math.ceil(Math.hypot(bx - ax, by - ay) / 5);
      let d = `M${ax + 0.5} ${ay + 0.5}`;
      for (let k = 1; k < n; k++)
        d += `L${Math.round(ax + ((bx - ax) * k) / n + (rnd() - 0.5) * 5) + 0.5} ${Math.round(ay + ((by - ay) * k) / n + (rnd() - 0.5) * 5) + 0.5}`;
      out.push(d + `L${bx + 0.5} ${by + 0.5}`);
    }
  return out.join("");
}

const STREAMS = buildStreams();

const PAD_ROWS = [SHADE[0], ...SHADE, SHADE[SHADE.length - 1]].map((r) => r[0] + r + r[r.length - 1]);

function MapDrawing() {
  return (
    <svg viewBox={`0 0 ${MAP_W} ${MAP_H}`} className="h-[763px] w-[499px] shrink-0 overflow-hidden" role="img" aria-label="Elevation and drainage map">
      <defs>
        <filter id="soft" x="-30" y="-30" width="560" height="850" filterUnits="userSpaceOnUse" colorInterpolationFilters="sRGB">
          <feGaussianBlur stdDeviation="8" />
        </filter>
        <filter id="slight" x="0" y="0" width="499" height="763" filterUnits="userSpaceOnUse" colorInterpolationFilters="sRGB">
          <feTurbulence type="fractalNoise" baseFrequency="0.09" numOctaves="4" seed="8" result="t" />
          <feDisplacementMap in="SourceGraphic" in2="t" scale="16" xChannelSelector="R" yChannelSelector="G" />
          <feGaussianBlur stdDeviation="1" />
        </filter>
        <filter id="grain" x="0" y="0" width="100%" height="100%">
          <feTurbulence type="fractalNoise" baseFrequency="0.04" numOctaves="5" seed="4" />
          <feColorMatrix values="0 0 0 0 0  0 0 0 0 0  0 0 0 0 0  1.600 0 0 0 -0.700" />
        </filter>
      </defs>
      <g filter="url(#soft)" shapeRendering="crispEdges">
        {PAD_ROWS.map((row, r) =>
          row.split("").map((ch, c) => {
            const v = parseInt(ch, 16) * 15 + (ch === "0" ? 0 : 6);
            return <rect key={r + "-" + c} x={(c - 1) * CELL} y={(r - 1) * CELL} width={CELL} height={CELL} fill={`rgb(${v},${v},${v})`} />;
          })
        )}
      </g>
      <rect width={MAP_W} height={MAP_H} filter="url(#grain)" opacity="0.200" />
      <g filter="url(#slight)" fill="none">
        <path d="M499 372 L478 400 L466 430 L462 470 L446 510 L440 560 L452 590" stroke="#505050" strokeWidth="9" opacity=".7" />
        <path d="M478 420 L484 460 L472 500 L456 525 L453 560 L464 590 L458 640 L466 680 L462 720 L468 762" stroke="#000" strokeWidth="7" opacity=".6" />
        <path d="M499 570 L488 600 L478 620 L468 650" stroke="#000" strokeWidth="6" opacity=".4" />
        <path
          d="M470 452 L484 458 L498 456 M484 458 L490 480 L482 500 L486 520 L474 545 L486 552 L496 540 M480 548 L484 575 M490 480 L498 500 M486 520 L496 525 M474 545 L462 540"
          stroke="#d0d0d0"
          strokeWidth="2"
          opacity=".7"
        />
        <path d="M484 470 L492 490 L484 510 L492 530 M490 465 L496 490 L490 515 L495 560 M478 540 L488 570" stroke="#d0d0d0" strokeWidth="5" opacity=".35" />
        <path
          d="M440 510 L415 500 L400 505 M438 530 L410 525 L395 530 M436 545 L400 550 L380 560 L350 568 M400 550 L385 545 M380 560 L365 556 M448 470 L420 462 L408 468 M446 490 L425 485 M470 420 L450 410 M420 540 L405 536"
          stroke="#3a3a3a"
          strokeWidth="2"
          opacity=".7"
        />
        <path d="M255 340 h9 v3 h9 v3 h-7 v3 h-6 v-3 h-5 Z M288 324 h6 v3 h-6 Z M300 316 h7 v4 h-7 Z M312 300 h7 v6 h-7 Z M283 218 h9 v6 h-9 Z M345 326 h8 v10 h-8 Z" fill="#222" opacity=".8" />
        <path d="M216 582 h8 v8 h-8 Z M228 594 h8 v10 h-8 Z M118 660 h8 v12 h-8 Z M130 676 h6 v4 h-6 Z" fill="#333" opacity=".5" />
        <path d="M32 752 L50 735 L58 715 L70 720 L78 704 L90 712 L100 722 L110 702 L114 722 L106 740 L112 763 H34 Z" fill="#161616" opacity=".75" />
      </g>
      <path d="M272 454 h5 v3 h3 v4 h-6 v-3 h-2 Z" fill="#fff" />
      <path d={STREAMS} stroke="#00c5ff" strokeWidth="1" fill="none" shapeRendering="crispEdges" />
    </svg>
  );
}

/* ------------------------------------------------------------------ */
/* Panels                                                              */
/* ------------------------------------------------------------------ */

function PanelHeader({ title }: { title: string }) {
  return (
    <header className="flex h-5 shrink-0 items-center bg-linear-to-r from-[#bccad9] to-[#d6e3f2] pr-px pl-1">
      <h2 className="flex-1">{title}</h2>
      <button aria-label={"Auto hide " + title}><Icon n="pin" /></button>
      <button aria-label={"Close " + title}><Icon n="close" /></button>
    </header>
  );
}

const Expander = ({ open }: { open: boolean }) => (
  <button aria-label={open ? "Collapse" : "Expand"} className="shrink-0">
    <svg viewBox="0 0 9 9" className="h-[9px] w-[9px]" aria-hidden="true" shapeRendering="crispEdges">
      <rect x="0.500" y="0.500" width="8" height="8" fill="#f5f5f5" stroke="#8e8e8e" />
      <path d={open ? "M2 4.500 H7" : "M2 4.500 H7 M4.500 2 V7"} stroke="#2f4fa0" />
    </svg>
  </button>
);

function LayerHead({ name, checked, selected }: { name: string; checked?: boolean; selected?: boolean }) {
  return (
    <div className="flex h-[18px] items-center pl-[27px]">
      <Expander open />
      <label className="flex items-center">
        <span className="relative ml-2 flex h-[11px] w-[11px]">
          <input type="checkbox" defaultChecked={checked} className="peer h-[11px] w-[11px] appearance-none border border-black bg-white" />
          <svg viewBox="0 0 11 11" className="pointer-events-none absolute inset-0 hidden peer-checked:block" fill="none" aria-hidden="true">
            <path d="M2.500 5 L4.500 7.500 L8.500 3" stroke="#000" strokeWidth="1.800" />
          </svg>
        </span>
        <span className={"ml-[6px] flex h-[18px] items-center px-[2px] whitespace-nowrap " + (selected ? "bg-[#0078d7] text-white" : "")}>{name}</span>
      </label>
    </div>
  );
}

function LineLayer({ name, checked, color }: { name: string; checked?: boolean; color: string }) {
  return (
    <li>
      <LayerHead name={name} checked={checked} />
      <div className="flex h-[18px] items-center pl-[59px]">
        <span className={"h-px w-[14px] " + color} />
      </div>
    </li>
  );
}

function RasterLayer({ name, high, low, checked, selected }: { name: string; high: string; low: string; checked?: boolean; selected?: boolean }) {
  return (
    <li className="h-[108px]">
      <LayerHead name={name} checked={checked} selected={selected} />
      <div className="h-[18px] pl-[82px] leading-[18px]">Value</div>
      <div className="flex pl-[59px]">
        <span className="h-[35px] w-[13px] bg-linear-to-b from-[#101010] to-[#fafafa]" />
        <span className="mt-[17px] h-px w-px bg-black" />
        <div className="-mt-[3px] ml-1 flex h-[54px] flex-col justify-between leading-[18px]">
          <span>High : {high}</span>
          <span>Low : {low}</span>
        </div>
      </div>
    </li>
  );
}

type Row = [number, "open" | "shut", string, string];
const tifs = [
  "AP_26885_FBS_F0160_RT1.dem.tif", "AP_26885_FBS_F0170_RT1.dem.tif", "AP_26885_FBS_F0180_RT1.dem.tif", "AP_26885_FBS_F0190_RT1.dem.tif",
  "AP_26885_FBS_F0200_RT1.dem.tif", "AP_27133_FBS_F0160_RT1.dem.tif", "AP_27133_FBS_F0170_RT1.dem.tif", "AP_27133_FBS_F0180_RT1.dem.tif",
  "AP_27133_FBS_F0190_RT1.dem.tif", "AP_27133_FBS_F0200_RT1.dem.tif", "AP_27308_FBS_F0160_RT1.dem.tif", "AP_27308_FBS_F0170_RT1.dem.tif",
  "AP_27308_FBS_F0180_RT1.dem.tif", "AP_27308_FBS_F0190_RT1.dem.tif", "AP_27308_FBS_F0200_RT1.dem.tif", "AP_27381_FBS_F0160_RT1.dem.tif",
  "AP_27381_FBS_F0170_RT1.dem.tif", "AP_27381_FBS_F0180_RT1.dem.tif", "APFBSRT1MosaicArcGISPro.tif", "APFBSRT1MosaicArcGISProZE.tif",
];
const dirs = [".gdb", ".git", ".github", ".icons", ".idea", ".map", ".ProjectionFile", ".refs", ".shp", ".src", ".temp", "HECGeoHMS", "HECHMS", "Section01", "Section02"];
const CATALOG: Row[] = [
  [0, "shut", "folderHome", "Home - R.LTWB\\HECGeoHMS"],
  [0, "open", "folderConn", "Folder Connections"],
  [1, "shut", "folderLink", "C:\\"],
  [1, "shut", "folderLink", "D:\\"],
  [1, "open", "folderLink", "D:\\R.LTWB"],
  [2, "shut", "folder", ".datasets"],
  [2, "open", "folder", ".dem"],
  [3, "open", "folder", "ALOS"],
  ...tifs.map((t): Row => [4, "shut", "raster", t]),
  [3, "shut", "folder", "ASTER"],
  [3, "shut", "folder", "SRTM"],
  ...dirs.map((t): Row => [2, "shut", "folder", t]),
];
const INDENT = ["pl-[6px]", "pl-[25px]", "pl-[44px]", "pl-[63px]", "pl-[82px]"];

const MENUS: [string, string][] = [
  ["File", "w-[34px]"], ["Edit", "w-[36px]"], ["View", "w-[41px]"], ["Bookmarks", "w-[75px]"], ["Insert", "w-[45px]"],
  ["Selection", "w-[64px]"], ["Geoprocessing", "w-[94px]"], ["Customize", "w-[72px]"], ["Windows", "w-[65px]"], ["Help", "w-[40px]"],
];

const Btns = ({ list }: { list: string[] }) => (
  <>
    {list.map((n) => (
      <Btn key={n} n={n} />
    ))}
  </>
);

export default function App() {
  return (
    <div className='flex h-screen min-w-[1880px] flex-col overflow-hidden bg-[#f0f0f0] font-["Open_Sans","Noto_Sans",sans-serif] text-[11px] text-black'>
      <div className="flex h-[23px] shrink-0 items-center bg-[#f2f2f2] pl-1">
        <Icon n="app" />
        <h1 className="ml-1 flex-1 text-[12px] text-[#8c8c8c]">HECGeoHMS.mxd - ArcMap</h1>
        <div className="flex gap-[29px] pr-4">
          <button aria-label="Minimize"><Icon n="winMin" /></button>
          <button aria-label="Restore"><Icon n="winRest" /></button>
          <button aria-label="Close window"><Icon n="winClose" /></button>
        </div>
      </div>

      <div className="shrink-0 bg-linear-to-r from-[#f0f0f0] to-[#fafafa]">
        <nav className="flex h-[25px] items-center pl-[14px]">
          {MENUS.map(([m, w]) => (
            <button key={m} className={w + " shrink-0 text-left whitespace-nowrap"}>{m}</button>
          ))}
        </nav>

        <div className="flex h-[26px] items-center">
          <Toolbar ml="ml-[5px]">
            <Btns list={["newDoc", "open", "save", "print"]} />
            <Sep />
            <Btns list={["cut", "copy", "paste", "del"]} />
            <Sep />
            <Btns list={["undo", "redo"]} />
            <Sep />
            <Btn n="addData" />
            <Drop />
            <Sep />
            <Combo w="w-[148px]" label="Map scale" value="1:1,249,905" />
            <Sep />
            <Btn n="editor" on />
            <Sep />
            <Btns list={["winToc", "winCatalog", "winSearch", "winToolbox", "winPython"]} />
            <Sep />
            <Btn n="model" />
          </Toolbar>
          <Toolbar ml="ml-[23px]">
            <MenuBtn w="w-[60px]">Drawing</MenuBtn>
            <Btns list={["cursor", "rotEl", "zoomEl"]} />
            <Sep />
            <Btn n="rect" />
            <Drop />
            <Letter ch="A" cls="font-bold" />
            <Drop />
            <Btn n="vertEl" />
            <Sep />
            <Combo w="w-[169px]" label="Font" value="Arial" icon="docArial" />
            <Combo w="w-[46px]" label="Font size" value="10" />
            <Letter ch="B" cls="font-bold" />
            <Letter ch="I" cls="font-bold italic" />
            <Letter ch="U" cls="font-bold underline" />
            <Sep />
            <Letter ch="A" cls="font-bold" bar="bg-black" />
            <Drop />
            <Swatch n="bucket" bar="bg-[#ffffaa]" />
            <Drop />
            <Swatch n="pen" bar="bg-black" />
            <Drop />
            <Swatch n="dot" bar="bg-[#55ff00]" />
            <Drop />
          </Toolbar>
        </div>

        <div className="flex h-[26px] items-center">
          <Toolbar ml="ml-[11px]">
            <Btns list={["zoomIn", "zoomOut"]} />
            <Btn n="hand" on />
            <Btn n="globe" />
            <Sep />
            <Btns list={["fixedIn", "fixedOut"]} />
            <Sep />
            <Btns list={["back", "forward"]} />
            <Sep />
            <Btn n="select" />
            <Drop />
            <Btn n="clearSel" />
            <Sep />
            <Btn n="cursor" />
            <Sep />
            <Btns list={["identify", "bolt", "popup"]} />
            <Sep />
            <Btn n="measure" />
            <Sep />
            <Btns list={["find", "route", "xy"]} />
            <Sep />
            <Btn n="time" />
            <Sep />
            <Btn n="viewer" />
          </Toolbar>
          <Toolbar ml="ml-[21px]">
            <MenuBtn w="w-[67px]">Snapping</MenuBtn>
            <Btn n="snapPoint" on />
            <Btn n="snapEnd" />
            <Btn n="snapVertex" on />
            <Btn n="snapEdge" />
          </Toolbar>
          <Toolbar ml="ml-[30px]">
            <Btns list={["lZoomIn", "lZoomOut", "lHand", "lMove", "l11"]} />
            <Sep />
            <Btns list={["lIn", "lOut"]} />
            <Sep />
            <Btns list={["lBack", "lFwd"]} />
            <Combo w="w-[58px]" label="Page zoom" value="100%" mark="w-7 text-[#3f5f7c]" />
            <Sep />
            <Btn n="draft" on />
            <Btns list={["focus", "changeLayout", "pages"]} />
          </Toolbar>
          <Toolbar ml="ml-[72px]">
            <Btns list={["refreshSheet", "refreshGray"]} />
            <Combo w="w-[58px]" label="Page number" value="0" mark="w-2 text-white" />
            <Sep />
            <Btn n="flag" />
          </Toolbar>
          <Toolbar ml="ml-[7px]">
            <MenuBtn w="w-[72px]">3D Analyst</MenuBtn>
            <Sep />
            <Combo w="w-[180px]" label="3D Analyst layer" value="ASTGTMV003MosaicArcGISProZE.tif" icon="diamond" boxed />
            <Btns list={["contour", "steep", "sight", "ipPoint", "ipLine", "ipPoly"]} />
            <Sep />
            <Btn n="profile" />
            <Drop gray />
            <Sep />
            <Btn n="arcScene" />
            <Sep />
            <Btn n="arcGlobe" />
          </Toolbar>
        </div>

        <div className="flex h-[26px] items-center">
          <Toolbar ml="ml-[17px]">
            <Btns list={["g1", "g2", "g3", "g4", "g5"]} />
            <Sep />
            <Btns list={["g6", "ball"]} />
            <Sep />
            <Btns list={["g7", "g8", "g9", "g10", "g11"]} />
            <Sep />
            <Btns list={["g12", "g13"]} />
          </Toolbar>
          <Toolbar ml="ml-[15px]">
            <MenuBtn w="w-[47px]">Editor</MenuBtn>
            <Sep />
            <Btns list={["cursorGray", "cursorA"]} />
            <Sep />
            <Btns list={["line", "arc", "trace"]} />
            <Drop gray />
            <Btn n="burst" />
            <Sep />
            <Btns list={["edVert", "reshape", "cutPoly", "split", "rotate"]} />
            <Sep />
            <Btns list={["attrTable", "sketch"]} />
            <Sep />
            <Btn n="createGray" />
          </Toolbar>
          <Toolbar ml="ml-[27px]">
            <MenuBtn w="w-[78px]">LAS Dataset</MenuBtn>
            <Sep />
            <Combo w="w-[179px]" label="LAS dataset layer" value="" boxed gray />
            <Sep />
            <Btn n="las" />
            <Drop gray />
            <Btn n="lasSurf" />
            <Drop gray />
            <MenuBtn w="w-[46px]">Filters</MenuBtn>
            <Sep />
            <Btns list={["gLeft", "gRight", "gUp", "gDown"]} />
            <Sep />
            <Btns list={["lasProf", "las3d"]} />
          </Toolbar>
        </div>

        <div className="flex h-[26px] items-center">
          <Toolbar ml="ml-[5px]">
            <MenuBtn w="w-[90px]">Preprocessing</MenuBtn>
            <MenuBtn w="w-[86px]">Project Setup</MenuBtn>
            <MenuBtn w="w-[104px]">Basin Processing</MenuBtn>
            <MenuBtn w="w-[93px]">Characteristics</MenuBtn>
            <MenuBtn w="w-[75px]">Parameters</MenuBtn>
            <MenuBtn w="w-[42px]">HMS</MenuBtn>
            <MenuBtn w="w-[46px]">Utility</MenuBtn>
            <Btns list={["flow", "pinRed", "aPlus", "axis", "quill"]} />
            <Combo w="w-[108px]" label="Element type" value="Reservoir" />
            <Btn n="pencil" />
            <MenuBtn w="w-[35px]" plain>Help</MenuBtn>
          </Toolbar>
        </div>
      </div>

      <main className="flex min-h-0 flex-1">
        <aside className="ml-[2px] flex w-[375px] shrink-0 flex-col">
          <PanelHeader title="Table Of Contents" />
          <div className="flex h-[26px] shrink-0 items-center bg-linear-to-b from-[#fcfcfc] to-[#f0f0f0] pl-1">
            <Btn n="listOrder" on />
            <Btns list={["listSource", "listVis", "listSel"]} />
            <Sep />
            <Btn n="options" />
          </div>
          <ul className="min-h-0 flex-1 overflow-hidden border border-[#828790] bg-white pt-px">
            <li className="flex h-[18px] items-center pl-2 font-bold">
              <Expander open />
              <span className="mr-1 ml-[7px] flex"><Icon n="layers" /></span>
              Layers
            </li>
            <LineLayer name="DrenajeSencilloIGAC100kZEMergeNoAttrib" checked color="bg-[#00c5ff]" />
            <LineLayer name="DrenajeSencilloIGAC100kZEMerge" color="bg-[#730017]" />
            <RasterLayer name="ASTGTMV003MosaicArcGISProZE.tif" high="5687" low="0" />
            <RasterLayer name="SRTMV003MosaicArcGISProZE.tif" high="5696" low="-46" />
            <RasterLayer name="APFBSRT1MosaicArcGISProZE.tif" high="5709" low="-48" checked selected />
          </ul>
        </aside>

        <section className="ml-[5px] flex min-w-0 flex-1 flex-col border-t-2 border-r border-b border-l-2 border-t-[#696969] border-r-[#e3e3e3] border-b-[#e3e3e3] border-l-[#696969] bg-[#f0f0f0]">
          <div className="flex min-h-0 flex-1">
            <div className="flex min-w-0 flex-1 items-center justify-center bg-white">
              <MapDrawing />
            </div>
            <div className="flex w-[17px] flex-col items-center border-l border-[#e3e3e3]">
              <span className="mt-4 mb-[18px] w-[2px] flex-1 bg-[#8a8a8a]" />
            </div>
          </div>
          <div className="flex h-[18px] shrink-0 items-center border-t border-[#e3e3e3]">
            <button aria-label="Data view" className="flex h-4 w-[17px] items-center justify-center rounded-[2px] border border-[#99d1ff] bg-[#cce8ff]"><Icon n="dataView" /></button>
            <button aria-label="Layout view" className="flex h-4 w-[18px] items-center justify-center"><Icon n="layoutView" /></button>
            <Sep />
            <button aria-label="Refresh" className="mx-px"><Icon n="refresh" /></button>
            <button aria-label="Pause drawing"><Icon n="pause" /></button>
            <span className="mr-9 ml-4 h-[2px] flex-1 bg-[#8a8a8a]" />
          </div>
        </section>

        <aside className="ml-[5px] flex w-[491px] shrink-0 flex-col bg-[#f8f8f8]">
          <PanelHeader title="Catalog" />
          <div className="flex h-[26px] shrink-0 items-center gap-px border-b border-[#dcdcdc] bg-white pl-1">
            <Btn n="cBack" />
            <Drop />
            <Btns list={["cFwd", "cUp", "home", "dbHome"]} />
            <Sep />
            <Btn n="gridView" wide />
            <Drop gray />
            <Sep />
            <Btn n="connect" />
            <Sep />
            <Btn n="treeView" wide />
            <Sep />
            <Btn n="options" />
          </div>
          <div className="flex h-[24px] shrink-0 items-center bg-[#f0f0f0] pr-[2px] pl-[2px]">
            <span className="w-[52px] shrink-0">Location:</span>
            <Combo w="w-[435px]" label="Location" value="APFBSRT1MosaicArcGISProZE.tif" icon="raster" />
          </div>
          <div className="mr-[3px] ml-px flex min-h-0 flex-1 border-t-2 border-r border-b border-l-2 border-t-[#696969] border-r-[#e3e3e3] border-b-[#e3e3e3] border-l-[#696969] bg-white">
            <ul className="flex-1 overflow-hidden">
              {CATALOG.map(([lvl, state, icon, text]) => (
                <li key={lvl + text} className={INDENT[lvl] + " flex h-[17px] items-center"}>
                  <Expander open={state === "open"} />
                  <span className="ml-[7px] flex"><Icon n={icon} /></span>
                  <span className={"ml-[2px] px-[2px] leading-[17px] whitespace-nowrap " + (text === "APFBSRT1MosaicArcGISProZE.tif" ? "bg-[#f0f0f0]" : "")}>{text}</span>
                </li>
              ))}
            </ul>
            <div className="flex w-[17px] flex-col items-center bg-[#fafafa] pt-[17px]">
              <span className="h-[508px] w-[2px] bg-[#8a8a8a]" />
            </div>
          </div>
          <div role="tablist" className="flex h-[25px] shrink-0 items-start pt-[4px] pl-[3px] text-[#6d6d6d]">
            {([["winIdentify", "Identify", "w-[68px]"], ["winCatalog", "Catalog", "w-[69px]"], ["winSearch", "Search", "w-[63px]"], ["createFeat", "Create Features", "w-[110px]"]] as const).map(([ic, t, w]) => (
              <button
                key={t}
                role="tab"
                aria-selected={t === "Catalog"}
                className={
                  w +
                  " flex h-[19px] shrink-0 items-center gap-[2px] rounded-b-[3px] border border-t-0 border-[#a0a0a0] pl-1 whitespace-nowrap " +
                  (t === "Catalog" ? "bg-white text-black" : "bg-[#f0f0f0]")
                }
              >
                <Icon n={ic} />
                {t}
              </button>
            ))}
          </div>
        </aside>
      </main>

      <footer className="flex h-[21px] shrink-0 items-center justify-end border-b border-[#c0c0c0] bg-[#f0f0f0]">
        <span className="mr-1 h-4 w-[126px] border border-[#ececec]" />
        <span className="mr-1 h-4 w-[18px] border border-[#ececec]" />
        <span className="w-[252px] whitespace-pre">4976538.951  2536261.945 Meters</span>
      </footer>
    </div>
  );
}
